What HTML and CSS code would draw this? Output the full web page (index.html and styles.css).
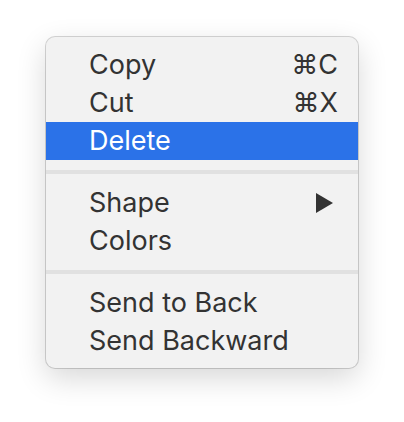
FILE: index.html
```html
<!DOCTYPE html>
<html>
<head>
<meta charset="utf-8">
<link rel="stylesheet" href="styles.css">
</head>
<body>
<div class="stage">
  <div class="menu">
    <div class="item"><span class="label">Copy</span><span class="key">⌘C</span></div>
    <div class="item"><span class="label">Cut</span><span class="key">⌘X</span></div>
    <div class="item active"><span class="label">Delete</span></div>
    <div class="sep"></div>
    <div class="item"><span class="label">Shape</span><svg class="arrow" width="17" height="20" viewBox="0 0 17 20"><polygon points="0,0 17,10 0,20" fill="#333"/></svg></div>
    <div class="item"><span class="label">Colors</span></div>
    <div class="sep"></div>
    <div class="item"><span class="label">Send to Back</span></div>
    <div class="item"><span class="label">Send Backward</span></div>
  </div>
</div>
</body>
</html>
```
FILE: styles.css
```css
html, body {
  margin: 0;
  padding: 0;
  background: #ffffff;
}
body {
  min-height: 422px;
}
.stage {
  padding: 37px 0 0 46px;
}
.menu {
  width: 312px;
  box-sizing: border-box;
  background: #f2f2f2;
  border-radius: 9px;
  padding: 9px 0 8px;
  box-shadow: 0 0 0 1px rgba(0,0,0,0.16), 0 10px 30px rgba(0,0,0,0.16);
  font-family: Inter, "Liberation Sans", Arial, sans-serif;
  font-size: 27px;
  color: #333333;
  overflow: hidden;
}
.item {
  height: 38px;
  box-sizing: border-box;
  padding: 0 20px 2px 43px;
  display: flex;
  align-items: center;
  justify-content: space-between;
}
.item.active {
  background: #2b72e8;
  color: #ffffff;
}
.arrow {
  margin: 2px 5px 0 0;
}
.sep {
  height: 4px;
  background: #e1e1e1;
  margin: 10px 0;
}
```
